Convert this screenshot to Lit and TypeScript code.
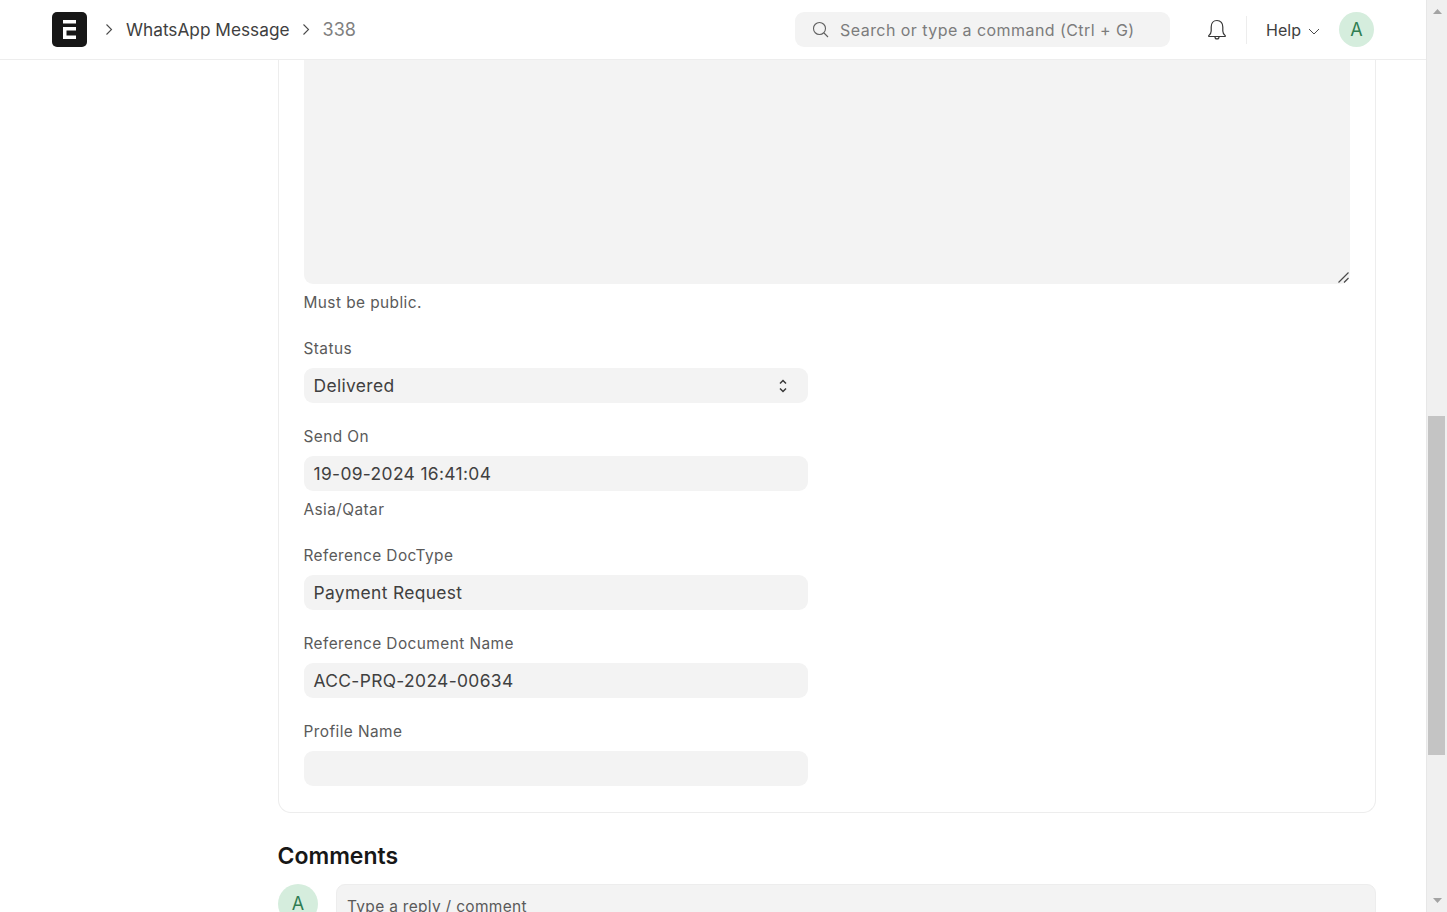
import { LitElement, html, css, svg } from "lit";
import { customElement } from "lit/decorators.js";

const chevron = svg`<path d="M1.5 1.5 L6.5 6.5 L1.5 11.5" fill="none" stroke="#4a4a4a" stroke-width="1.1"/>`;

@customElement("app-root")
export class AppRoot extends LitElement {
  static styles = css`
    :host {
      display: flex;
      width: 1447px;
      height: 912px;
      overflow: hidden;
      background: #fff;
      font-family: Inter, "Liberation Sans", sans-serif;
      color: #383838;
    }
    .page { width: 1426px; height: 912px; overflow: hidden; flex: none; }
    header {
      height: 59px;
      border-bottom: 1px solid #ededed;
      display: flex;
      align-items: center;
      padding-left: 52px;
      box-sizing: content-box;
    }
    .logo { width: 35px; height: 35px; flex: none; display: block; }
    .crumb-chev { width: 8px; height: 13px; flex: none; display: block; }
    .c1 { margin-left: 18px; }
    .c2 { margin-left: 12px; }
    .crumb { font-size: 17.25px; margin-left: 13px; white-space: nowrap; color: #404040; }
    .crumb.last { font-size: 18px; color: #808080; margin-left: 13px; }
    .search {
      margin-left: auto;
      width: 375px;
      height: 35px;
      border-radius: 9px;
      background: #f3f3f3;
      display: flex;
      align-items: center;
      padding-left: 17px;
      box-sizing: border-box;
      gap: 11px;
      font-size: 16px;
      letter-spacing: 0.44px;
      color: #7c7c7c;
      white-space: nowrap;
    }
    .search svg { width: 17px; height: 17px; flex: none; }
    .bell { width: 20px; height: 22px; margin-left: 37px; flex: none; }
    .divider { width: 1px; height: 28px; background: #ededed; margin-left: 19px; flex: none; }
    .help { margin-left: 19px; font-size: 16px; color: #404040; }
    .help-chev { width: 12px; height: 7px; margin-left: 7px; margin-top: 4px; flex: none; }
    .avatar {
      border-radius: 50%;
      background: #d5eddd;
      color: #2f7d52;
      display: flex;
      align-items: center;
      justify-content: center;
      flex: none;
    }
    .avatar.top { width: 35px; height: 35px; margin-left: 19px; margin-right: 52px; font-size: 18px; }
    .content { padding-left: 278px; width: 1098px; }
    .card {
      border: 1px solid #ededed;
      border-top: none;
      border-radius: 0 0 13px 13px;
      padding: 0 25px 26px;
    }
    .textarea {
      height: 224px;
      background: #f3f3f3;
      border-radius: 0 0 9px 9px;
      position: relative;
    }
    .grip { position: absolute; right: 1px; bottom: 1px; width: 11px; height: 11px; }
    .help-text { font-size: 15.4px; line-height: 18px; color: #5a5a5a; margin: 10px 0 0 -0.5px; letter-spacing: 0.43px; }
    .field { margin-top: 25px; }
    .help-text + .field { margin-top: 28px; }
    label { display: block; font-size: 15.4px; line-height: 18px; color: #5a5a5a; margin: 0 0 10px -0.5px; letter-spacing: 0.43px; }
    .control {
      width: 504px;
      height: 35px;
      box-sizing: border-box;
      background: #f3f3f3;
      border-radius: 9px;
      padding: 0 10px 0 9.5px;
      font-size: 17.4px;
      letter-spacing: 0.35px;
      color: #404040;
      display: flex;
      align-items: center;
      justify-content: space-between;
    }
    .updown { width: 10px; height: 16px; margin-right: 10px; }
    .comments { font-size: 23px; font-weight: 600; color: #171717; line-height: 28px; margin: 28.5px 0 0 -0.5px; }
    .reply { display: flex; gap: 18px; margin-top: 14.5px; }
    .avatar.big { width: 40px; height: 40px; font-size: 18px; padding-bottom: 2px; box-sizing: border-box; }
    .reply-box {
      flex: 1;
      height: 120px;
      background: #f3f3f3;
      border: 1px solid #ededed;
      border-radius: 9px;
      padding: 12px 10px;
      box-sizing: border-box;
      font-size: 15.5px;
      line-height: 20px;
      letter-spacing: 0.3px;
      color: #5a5a5a;
    }
    .sb {
      width: 21px;
      height: 912px;
      flex: none;
      background: #f0f0f0;
      border-left: 1px solid #e7e7e7;
      box-sizing: border-box;
      display: flex;
      flex-direction: column;
      align-items: center;
    }
    .arrow { width: 9px; height: 5px; flex: none; margin-top: 9px; }
    .arrow.down { margin-top: auto; margin-bottom: 9px; }
    .thumb { width: 17px; height: 339px; background: #c4c4c4; margin: 402px 1px 0 0; flex: none; }
  `;

  field(label: string, value: string, extra?: unknown) {
    return html`<div class="field"><label>${label}</label><div class="control"><span>${value}</span>${extra ?? ""}</div></div>`;
  }

  render() {
    const updown = html`<svg class="updown" viewBox="0 0 10 16"><path d="M2 5.5 L5 2.5 L8 5.5 M2 10.5 L5 13.5 L8 10.5" fill="none" stroke="#383838" stroke-width="1.5"/></svg>`;
    return html`
      <div class="page">
        <header>
          <svg class="logo" viewBox="0 0 35 35">
            <rect width="35" height="35" rx="5" fill="#171717"/>
            <path d="M11 8 H24 V11.5 H11 Z M11 15 H24 V18.5 H14.5 V23.5 H24 V27 H11 Z" fill="#fff"/>
          </svg>
          <svg class="crumb-chev c1" viewBox="0 0 8 13">${chevron}</svg>
          <span class="crumb">WhatsApp Message</span>
          <svg class="crumb-chev c2" viewBox="0 0 8 13">${chevron}</svg>
          <span class="crumb last">338</span>
          <div class="search">
            <svg viewBox="0 0 17 17"><circle cx="7.5" cy="7.5" r="6" fill="none" stroke="#606060" stroke-width="1.1"/><path d="M12 12 L16 16" stroke="#606060" stroke-width="1.1"/></svg>
            <span>Search or type a command (Ctrl + G)</span>
          </div>
          <svg class="bell" viewBox="0 0 20 22">
            <path d="M10 1.5 C6.2 1.5 4.2 4.4 4.2 8 V12 C4.2 14 3.4 15.2 1.8 16.6 C1.5 17 1.7 17.5 2.2 17.5 H17.8 C18.3 17.5 18.5 17 18.2 16.6 C16.6 15.2 15.8 14 15.8 12 V8 C15.8 4.4 13.8 1.5 10 1.5 Z" fill="none" stroke="#383838" stroke-width="1.2"/>
            <path d="M8 18 C8 20.6 12 20.6 12 18" fill="none" stroke="#383838" stroke-width="1.2"/>
          </svg>
          <div class="divider"></div>
          <span class="help">Help</span>
          <svg class="help-chev" viewBox="0 0 12 7"><path d="M1 1 L6 6 L11 1" fill="none" stroke="#4a4a4a" stroke-width="1"/></svg>
          <div class="avatar top">A</div>
        </header>
        <div class="content">
          <div class="card">
            <div class="textarea">
              <svg class="grip" viewBox="0 0 11 11"><path d="M0.5 10.5 L10.5 0.5 M6 10.5 L10.5 6" stroke="#4a4a4a" stroke-width="1.2"/></svg>
            </div>
            <div class="help-text">Must be public.</div>
            ${this.field("Status", "Delivered", updown)}
            ${this.field("Send On", "19-09-2024 16:41:04")}
            <div class="help-text">Asia/Qatar</div>
            ${this.field("Reference DocType", "Payment Request")}
            ${this.field("Reference Document Name", "ACC-PRQ-2024-00634")}
            ${this.field("Profile Name", "")}
          </div>
          <div class="comments">Comments</div>
          <div class="reply">
            <div class="avatar big">A</div>
            <div class="reply-box">Type a reply / comment</div>
          </div>
        </div>
      </div>
      <div class="sb">
        <svg class="arrow" viewBox="0 0 9 5"><path d="M0 5 L4.5 0 L9 5 Z" fill="#a3a3a3"/></svg>
        <div class="thumb"></div>
        <svg class="arrow down" viewBox="0 0 9 5"><path d="M0 0 L4.5 5 L9 0 Z" fill="#a3a3a3"/></svg>
      </div>
    `;
  }
}
